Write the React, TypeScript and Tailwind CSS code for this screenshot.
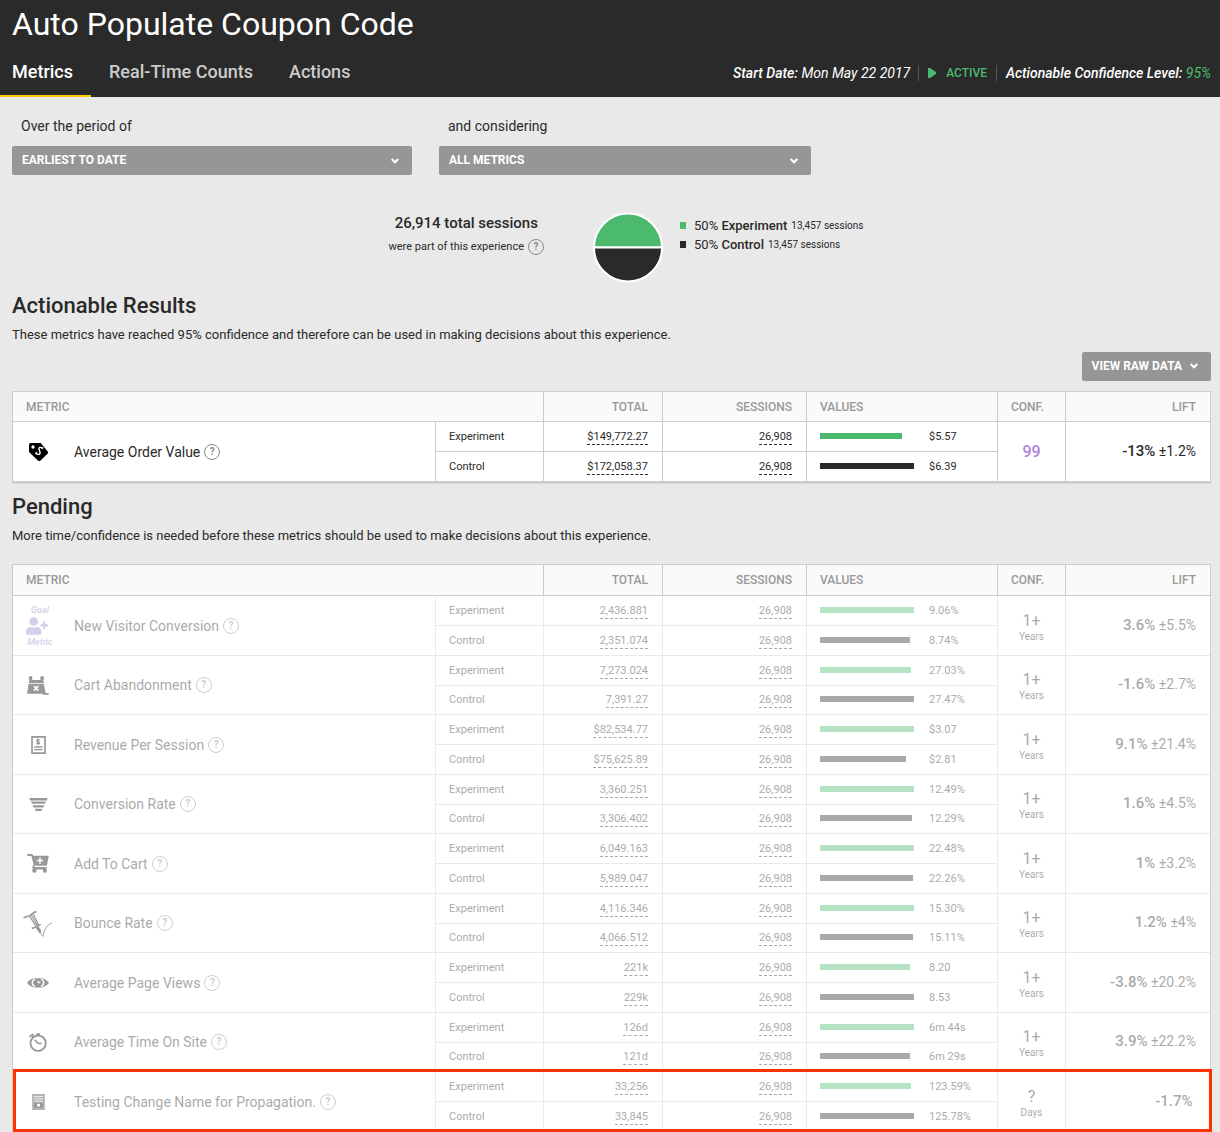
import type { ReactNode } from "react";
import { FaUserPlus } from "react-icons/fa";

type Variant = { total: string; sessions: string; value: string; bar: number };

type Metric = {
  name: string;
  icon: ReactNode;
  experiment: Variant;
  control: Variant;
  conf: string;
  unit?: string;
  lift: string;
  margin?: string;
};

const TagIcon = () => (
  <svg viewBox="84 186 57 54" className="h-[18px] w-[19px]">
    <path d="M84 191q0-5 5-5h30l22 26v5l-24 23h-5l-28-27z" fill="#000" />
    <circle cx="96" cy="198" r="5" fill="#fff" />
    <path
      d="M125 203c-5-6-13-4-11 2l3 9c2 6-6 9-11 3M122 204l4-5M108 214l-5 5"
      fill="none"
      stroke="#fff"
      strokeWidth="4"
    />
  </svg>
);

const GoalIcon = () => (
  <div className="flex w-8 shrink-0 flex-col items-center gap-px pl-1 text-[9px] leading-3 font-medium text-[#9688c8] italic">
    <span>Goal</span>
    <FaUserPlus className="h-[18px] w-[22px] self-start" />
    <span>Metric</span>
  </div>
);

const CartAbandonIcon = () => (
  <svg viewBox="84 346 66 57" className="h-[19px] w-[22px]">
    <path d="M92 350l6 14M133 350l-6 14" stroke="#000" strokeWidth="5" />
    <circle cx="95" cy="352" r="6" />
    <circle cx="129" cy="352" r="6" />
    <path d="M92 356h40l3 12h-46z" />
    <path d="M100 346h24v12h-24z" fill="#fff" />
    <path d="M89 370h45l6 27h9v5h-17l-2-3H84z" />
    <path d="M105 376l13 14M118 376l-13 14" stroke="#fff" strokeWidth="5" />
  </svg>
);

const ReceiptIcon = () => (
  <svg viewBox="90 525 44 54" className="h-[18px] w-[15px]">
    <path d="M92.500 527.500h39v49h-39z" fill="none" stroke="#000" strokeWidth="5" />
    <path
      d="M116 537c-9-4-12 3-6 5s9 7-5 6M110.500 533v18M99 558h25M99 566h25"
      fill="none"
      stroke="#000"
      strokeWidth="4"
    />
  </svg>
);

const FunnelIcon = () => (
  <svg viewBox="85 80 56 40" className="h-[13px] w-[19px]">
    <path d="M85 80h56l-2 8H87zM90 91h46l-3 7H93zM95 102h36l-3 7H98zM102 113h22l-2 7h-18z" />
  </svg>
);

const AddCartIcon = () => (
  <svg viewBox="76 252 66 58" className="h-[19px] w-[22px]">
    <path d="M76 252h15l4 5h47l-6 31H98v4h37v7H92v-10l4-3-7-28H76z" />
    <circle cx="98" cy="303" r="6.500" />
    <circle cx="130" cy="303" r="6.500" />
    <path d="M115 263v19M105 272h20" stroke="#fff" strokeWidth="5" />
  </svg>
);

const PogoIcon = () => (
  <svg viewBox="68 412 102 94" className="h-[31px] w-[34px]" fill="none" stroke="#000">
    <path d="M70 440c5-5 11-6 18-6M96 430c2-6 8-9 18-12" strokeWidth="5" />
    <path d="M86 436l16-12" strokeWidth="4" />
    <path d="M90 434l33 50M96 430l32 54M103 428l19 38" strokeWidth="4" />
    <path d="M98 476c8-2 20-8 30-14" strokeWidth="5" />
    <path d="M115 474l13 16" strokeWidth="7" />
    <path d="M122 486l14 17c3-22 12-38 31-46" strokeWidth="3" />
  </svg>
);

const EyeIcon = () => (
  <svg viewBox="84 83 66 29" className="h-[10px] w-[22px]">
    <path d="M84 97c7-10 17-14 26-14h14c9 0 19 4 26 14-7 10-17 14-26 14h-14c-9 0-19-4-26-14z" />
    <path d="M108 86c-11 4-11 18 0 22M126 86c11 4 11 18 0 22" fill="none" stroke="#fff" strokeWidth="4" />
    <path d="M116 91c1 5 4 6 8 5" fill="none" stroke="#fff" strokeWidth="4" />
  </svg>
);

const StopwatchIcon = () => (
  <svg viewBox="88 247 54 56" className="h-[19px] w-[18px]" fill="none" stroke="#000">
    <circle cx="115.500" cy="277" r="23" strokeWidth="5.500" />
    <path d="M89 258l13-7M110 250h11M96 250l4 8" strokeWidth="5" />
    <path d="M105 267l11 11h10" strokeWidth="5" />
  </svg>
);

const FormIcon = () => (
  <svg viewBox="95 429 39 49" className="h-4 w-[13px]">
    <path d="M95 429h39v49H95z" opacity=".75" />
    <path d="M101 437h27M101 444h27M101 451h27" stroke="#fff" strokeWidth="2.500" />
    <path d="M101 456h27v15h-27z" />
    <path d="M110 459h9v8h-9z" fill="#fff" />
  </svg>
);

const Chevron = ({ className = "" }: { className?: string }) => (
  <svg viewBox="0 0 8 6" className={`h-1.5 w-2 ${className}`} fill="none" stroke="#fff" strokeWidth="2">
    <path d="M0.700 1l3.300 3.300L7.300 1" />
  </svg>
);

const actionable: Metric[] = [
  {
    name: "Average Order Value",
    icon: <TagIcon />,
    experiment: { total: "$149,772.27", sessions: "26,908", value: "$5.57", bar: 87 },
    control: { total: "$172,058.37", sessions: "26,908", value: "$6.39", bar: 100 },
    conf: "99",
    lift: "-13%",
    margin: "±1.2%",
  },
];

const pending: Metric[] = [
  {
    name: "New Visitor Conversion",
    icon: <GoalIcon />,
    experiment: { total: "2,436.881", sessions: "26,908", value: "9.06%", bar: 100 },
    control: { total: "2,351.074", sessions: "26,908", value: "8.74%", bar: 96 },
    conf: "1+",
    unit: "Years",
    lift: "3.6%",
    margin: "±5.5%",
  },
  {
    name: "Cart Abandonment",
    icon: <CartAbandonIcon />,
    experiment: { total: "7,273.024", sessions: "26,908", value: "27.03%", bar: 97 },
    control: { total: "7,391.27", sessions: "26,908", value: "27.47%", bar: 100 },
    conf: "1+",
    unit: "Years",
    lift: "-1.6%",
    margin: "±2.7%",
  },
  {
    name: "Revenue Per Session",
    icon: <ReceiptIcon />,
    experiment: { total: "$82,534.77", sessions: "26,908", value: "$3.07", bar: 100 },
    control: { total: "$75,625.89", sessions: "26,908", value: "$2.81", bar: 91 },
    conf: "1+",
    unit: "Years",
    lift: "9.1%",
    margin: "±21.4%",
  },
  {
    name: "Conversion Rate",
    icon: <FunnelIcon />,
    experiment: { total: "3,360.251", sessions: "26,908", value: "12.49%", bar: 100 },
    control: { total: "3,306.402", sessions: "26,908", value: "12.29%", bar: 98 },
    conf: "1+",
    unit: "Years",
    lift: "1.6%",
    margin: "±4.5%",
  },
  {
    name: "Add To Cart",
    icon: <AddCartIcon />,
    experiment: { total: "6,049.163", sessions: "26,908", value: "22.48%", bar: 100 },
    control: { total: "5,989.047", sessions: "26,908", value: "22.26%", bar: 99 },
    conf: "1+",
    unit: "Years",
    lift: "1%",
    margin: "±3.2%",
  },
  {
    name: "Bounce Rate",
    icon: <PogoIcon />,
    experiment: { total: "4,116.346", sessions: "26,908", value: "15.30%", bar: 100 },
    control: { total: "4,066.512", sessions: "26,908", value: "15.11%", bar: 99 },
    conf: "1+",
    unit: "Years",
    lift: "1.2%",
    margin: "±4%",
  },
  {
    name: "Average Page Views",
    icon: <EyeIcon />,
    experiment: { total: "221k", sessions: "26,908", value: "8.20", bar: 96 },
    control: { total: "229k", sessions: "26,908", value: "8.53", bar: 100 },
    conf: "1+",
    unit: "Years",
    lift: "-3.8%",
    margin: "±20.2%",
  },
  {
    name: "Average Time On Site",
    icon: <StopwatchIcon />,
    experiment: { total: "126d", sessions: "26,908", value: "6m 44s", bar: 100 },
    control: { total: "121d", sessions: "26,908", value: "6m 29s", bar: 96 },
    conf: "1+",
    unit: "Years",
    lift: "3.9%",
    margin: "±22.2%",
  },
  {
    name: "Testing Change Name for Propagation.",
    icon: <FormIcon />,
    experiment: { total: "33,256", sessions: "26,908", value: "123.59%", bar: 97 },
    control: { total: "33,845", sessions: "26,908", value: "125.78%", bar: 100 },
    conf: "?",
    unit: "Days",
    lift: "-1.7%",
  },
];

function Help({ label }: { label: string }) {
  return (
    <button
      type="button"
      aria-label={`About ${label}`}
      className="inline-flex size-4 shrink-0 items-center justify-center rounded-full border border-[#888] text-[10px] leading-none font-bold text-[#888]"
    >
      ?
    </button>
  );
}

function Picker({ id, label, option, className }: { id: string; label: string; option: string; className: string }) {
  return (
    <div className={className}>
      <label htmlFor={id} className="block pl-[9px] text-sm leading-5">
        {label}
      </label>
      <div className="relative mt-[10px]">
        <select
          id={id}
          className="block h-[29px] w-full appearance-none rounded-xs bg-[#969696] px-[10px] pb-0.5 text-xs font-bold text-white"
        >
          <option>{option}</option>
        </select>
        <Chevron className="pointer-events-none absolute top-3 right-[13px]" />
      </div>
    </div>
  );
}

const cell = "border-b border-[#ccc] py-0 pr-[14px] pl-[13px]";

function VariantCells({ label, data, color }: { label: string; data: Variant; color: string }) {
  return (
    <>
      <td className={`${cell} border-r`}>{label}</td>
      <td className={`${cell} border-r text-right`}>
        <a href="#" className="inline-block border-b border-dashed border-[#2a2a2a] pt-px leading-[14px]">
          {data.total}
        </a>
      </td>
      <td className={`${cell} border-r text-right`}>
        <a href="#" className="inline-block border-b border-dashed border-[#2a2a2a] pt-px leading-[14px]">
          {data.sessions}
        </a>
      </td>
      <td className={`${cell} border-r`}>
        <div className="flex items-center gap-[15px]">
          <div className="w-[94px] pb-0.5">
            <div className={`h-[6px] ${color}`} style={{ width: `${data.bar}%` }} />
          </div>
          <span>{data.value}</span>
        </div>
      </td>
    </>
  );
}

function MetricRows({ metric, faded }: { metric: Metric; faded?: boolean }) {
  return (
    <tbody className={faded ? "group opacity-40" : "group"}>
      <tr className="h-[30px]">
        <td rowSpan={2} className="border-r border-b border-[#ccc] py-0 pr-[14px] pl-[10px]">
          <div className="flex items-center">
            <div className="flex w-[51px] shrink-0">
              <div className="flex w-[30px] justify-center">{metric.icon}</div>
            </div>
            <span className="mr-1 text-sm leading-5">{metric.name}</span>
            <Help label={metric.name} />
          </div>
        </td>
        <VariantCells label="Experiment" data={metric.experiment} color="bg-[#4cba6e]" />
        <td rowSpan={2} className="border-r border-b border-[#ccc] p-0 text-center">
          {metric.unit ? (
            <div className="pt-0.5">
              <div className="text-base leading-5">{metric.conf}</div>
              <div className="text-[10px] leading-3">{metric.unit}</div>
            </div>
          ) : (
            <span className="text-base font-medium text-[#b084d8]">{metric.conf}</span>
          )}
        </td>
        <td rowSpan={2} className={`${cell} text-right text-sm`}>
          <span className="text-[15px] font-medium">{metric.lift}</span>
          {metric.margin ? ` ${metric.margin}` : "\u00a0"}
        </td>
      </tr>
      <tr className={faded ? "h-[30px] group-even:h-[29px]" : "h-[30px]"}>
        <VariantCells label="Control" data={metric.control} color="bg-[#2a2a2a]" />
      </tr>
    </tbody>
  );
}

function MetricTable({ metrics, faded }: { metrics: Metric[]; faded?: boolean }) {
  const head = "border-b border-[#ccc] bg-[#fafafa] py-0 pr-[14px] pl-[13px] font-medium text-[#999]";
  return (
    <table
      className={`w-full table-fixed border-separate border-spacing-0 border border-[#ccc] bg-white text-[11px] leading-4 ${
        faded ? "border-b-0" : "shadow-[0_1px_0_#d6d6d6]"
      }`}
    >
      <colgroup>
        <col />
        <col className="w-[108px]" />
        <col className="w-[119px]" />
        <col className="w-[144px]" />
        <col className="w-[191px]" />
        <col className="w-[68px]" />
        <col className="w-[144px]" />
      </colgroup>
      <thead>
        <tr className={`text-xs ${faded ? "h-[31px]" : "h-[30px]"}`}>
          <th colSpan={2} className={`${head} border-r text-left`}>METRIC</th>
          <th className={`${head} border-r text-right`}>TOTAL</th>
          <th className={`${head} border-r text-right`}>SESSIONS</th>
          <th className={`${head} border-r text-left`}>VALUES</th>
          <th className={`${head} border-r text-left`}>CONF.</th>
          <th className={`${head} text-right`}>LIFT</th>
        </tr>
      </thead>
      {metrics.map((metric) => (
        <MetricRows key={metric.name} metric={metric} faded={faded} />
      ))}
    </table>
  );
}

export default function App() {
  return (
    <div className="min-h-screen bg-[#e9e9e9] font-[Roboto,sans-serif] text-[#2a2a2a]">
      <header className="bg-[#2a2a2a] text-white">
        <h1 className="px-3 pt-1 text-[32px] leading-10">Auto Populate Coupon Code</h1>
        <div className="flex items-end justify-between pr-[9px]">
          <nav className="flex text-lg font-medium">
            <a href="#" className="border-b-2 border-[#fc0] pt-[14px] pr-[18px] pb-[9px] pl-3">Metrics</a>
            <a href="#" className="px-[18px] pt-[14px] text-[#ccc]">Real-Time Counts</a>
            <a href="#" className="px-[18px] pt-[14px] text-[#ccc]">Actions</a>
          </nav>
          <div className="flex items-center pb-4 text-sm leading-4">
            <p className="border-r border-[#555] pr-2 italic">
              <b className="font-medium">Start Date:</b> <span>Mon May 22 2017</span>
            </p>
            <p className="flex items-center gap-[10px] border-r border-[#555] px-[9px] text-xs leading-4 font-medium text-[#4cba6e]">
              <svg viewBox="0 0 8 10" className="h-[10px] w-2" fill="currentColor">
                <path d="M0 0h2l6 4v2l-6 4H0z" />
              </svg>
              ACTIVE
            </p>
            <p className="pl-[9px] italic">
              <b className="font-medium">Actionable Confidence Level:</b> <span className="text-[#4cba6e]">95%</span>
            </p>
          </div>
        </div>
      </header>

      <main className="pt-[19px] pr-[9px] pl-3">
        <div className="flex gap-[27px]">
          <Picker id="period" label="Over the period of" option="EARLIEST TO DATE" className="w-[400px]" />
          <Picker id="metrics" label="and considering" option="ALL METRICS" className="w-[372px]" />
        </div>

        <section className="mt-9 flex justify-center pl-[29px]">
          <div className="pt-0.5 text-center">
            <p className="text-[15px] leading-5 font-medium">26,914 total sessions</p>
            <p className="mt-1 flex items-center gap-1 text-[11px] leading-5">
              were part of this experience <Help label="sessions" />
            </p>
          </div>
          <svg viewBox="0 0 72 72" className="mr-4 ml-12 size-[72px]" stroke="#fff" strokeWidth="2">
            <path d="M2 36.500a34 34 0 0 1 68 0z" fill="#4cba6e" />
            <path d="M2 36.500a34 34 0 0 0 68 0z" fill="#2a2a2a" />
          </svg>
          <ul className="pt-[5px] text-[13px] leading-[19px]">
            <li className="flex items-center">
              <span className="mr-2 h-[7px] w-1.5 bg-[#4cba6e]" />
              50%&nbsp;<b className="mr-1 font-medium">Experiment</b> <span className="text-[10px]">13,457 sessions</span>
            </li>
            <li className="flex items-center">
              <span className="mr-2 h-[7px] w-1.5 bg-[#2a2a2a]" />
              50%&nbsp;<b className="mr-1 font-medium">Control</b> <span className="text-[10px]">13,457 sessions</span>
            </li>
          </ul>
        </section>

        <section className="mt-[9px]">
          <h2 className="text-[22px] leading-7 font-medium">Actionable Results</h2>
          <p className="mt-[5px] text-[13px] leading-5">
            These metrics have reached 95% confidence and therefore can be used in making decisions about this
            experience.
          </p>
          <div className="mt-[7px] mb-[10px] flex justify-end">
            <button
              type="button"
              className="flex h-[29px] items-center gap-2 rounded-xs bg-[#969696] pr-[13px] pb-px pl-[10px] text-xs font-bold text-white"
            >
              VIEW RAW DATA <Chevron />
            </button>
          </div>
          <MetricTable metrics={actionable} />
        </section>

        <section className="mt-[10px]">
          <h2 className="text-[22px] leading-7 font-medium">Pending</h2>
          <p className="mt-[5px] mb-[18px] text-[13px] leading-5">
            More time/confidence is needed before these metrics should be used to make decisions about this experience.
          </p>
          <div className="relative">
            <MetricTable metrics={pending} faded />
            {/* highlight around the last metric */}
            <div className="pointer-events-none absolute -right-px bottom-0 left-px h-[63px] border-3 border-[#f30]" />
          </div>
        </section>
      </main>
    </div>
  );
}
